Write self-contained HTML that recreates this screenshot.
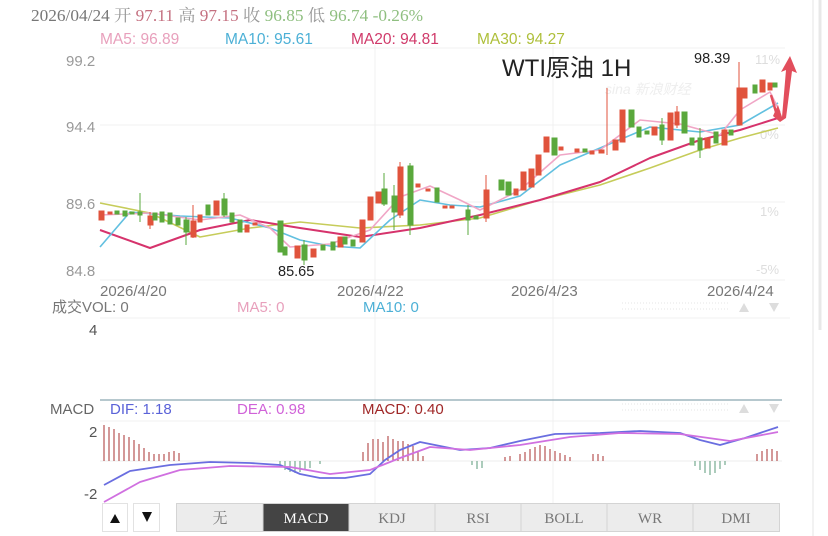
<!DOCTYPE html>
<html><head><meta charset="utf-8"><style>
html,body{margin:0;padding:0;background:#fff;width:828px;height:536px;overflow:hidden}
svg{display:block}
text{font-family:"Liberation Sans","Noto Sans CJK SC",sans-serif}
.s{font-family:"Liberation Serif","Noto Serif CJK SC",serif}
</style></head><body>
<svg width="828" height="536" viewBox="0 0 828 536" xmlns="http://www.w3.org/2000/svg">
<g stroke="#f0f0f0" stroke-width="1">
<line x1="100" y1="48" x2="785" y2="48"/>
<line x1="100" y1="125" x2="785" y2="125"/>
<line x1="100" y1="202" x2="785" y2="202"/>
<line x1="100" y1="280" x2="785" y2="280"/>
<line x1="375" y1="45" x2="375" y2="505"/>
<line x1="553" y1="45" x2="553" y2="505"/>
<line x1="100" y1="318" x2="790" y2="318"/>
<line x1="100" y1="421" x2="790" y2="421"/>
</g>
<line x1="813" y1="0" x2="813" y2="536" stroke="#f2f2f2" stroke-width="2"/>
<line x1="820" y1="0" x2="820" y2="330" stroke="#e8e8e8" stroke-width="3"/>
<line x1="100" y1="400" x2="782" y2="400" stroke="#8aa6b0" stroke-width="1.2"/>

<text x="31" y="21" font-size="16.5" class="s" fill="#777" textLength="392" lengthAdjust="spacingAndGlyphs">2026/04/24 <tspan fill="#999">开</tspan> <tspan fill="#c47080">97.11</tspan> <tspan fill="#999">高</tspan> <tspan fill="#c47080">97.15</tspan> <tspan fill="#999">收</tspan> <tspan fill="#8fbf80">96.85</tspan> <tspan fill="#999">低</tspan> <tspan fill="#8fbf80">96.74 -0.26%</tspan></text>
<text x="100" y="44" font-size="15.5" fill="#e8a0bc">MA5: 96.89</text>
<text x="225" y="44" font-size="15.5" fill="#4cb0d6">MA10: 95.61</text>
<text x="351" y="44" font-size="15.5" fill="#d03a6a">MA20: 94.81</text>
<text x="477" y="44" font-size="15.5" fill="#aebf3a">MA30: 94.27</text>

<text x="66" y="66" font-size="15" fill="#999">99.2</text>
<text x="66" y="132" font-size="15" fill="#999">94.4</text>
<text x="66" y="209" font-size="15" fill="#999">89.6</text>
<text x="66" y="276" font-size="15" fill="#999">84.8</text>
<g font-size="13" fill="#ddd"><text x="755" y="64">11%</text><text x="760" y="139">0%</text><text x="760" y="216">1%</text><text x="756" y="274">-5%</text></g>
<text x="605" y="94" font-size="14" fill="#eee" font-style="italic">sina 新浪财经</text>

<text x="502" y="76" font-size="24" fill="#222">WTI原油 1H</text>
<text x="694" y="63" font-size="14.5" fill="#222">98.39</text>
<text x="278" y="276" font-size="14.5" fill="#222">85.65</text>

<g fill="none" stroke-width="1.6" stroke-linejoin="round">
<polyline stroke="#c6cc5a" points="100,203 150,213 200,237 250,228 300,222 360,228 420,225 480,218 540,200 600,185 650,168 700,150 740,138 778,128"/>
<polyline stroke="#d6336c" stroke-width="2" points="100,230 150,248 200,230 250,220 300,228 360,237 420,228 480,215 540,200 600,182 650,158 700,140 740,130 778,118"/>
<polyline stroke="#62c0e0" points="100,247 130,212 180,216 230,218 270,228 300,240 330,246 360,248 390,220 420,200 450,205 480,207 520,196 560,165 600,148 650,127 700,132 740,125 778,103"/>
<polyline stroke="#f0a6c6" points="100,215 150,213 200,220 240,215 270,228 290,247 330,244 370,230 400,197 430,186 460,200 480,210 520,190 560,155 600,150 640,120 680,124 720,135 740,110 770,92 780,112"/>
</g>

<g stroke-width="1">
<g fill="#e0533c" stroke="#e0533c">
<rect x="99" y="211" width="5" height="9"/><rect x="108" y="212" width="4" height="2"/>
<rect x="148" y="216" width="5" height="9"/><line x1="150" y1="212" x2="150" y2="229"/>
<line x1="193" y1="205" x2="193" y2="238"/><rect x="191" y="221" width="5" height="16"/>
<rect x="198" y="215" width="4" height="7"/><rect x="214" y="201" width="5" height="14"/>
<rect x="245" y="225" width="4" height="7"/><rect x="253" y="223" width="4" height="2"/>
<rect x="295" y="246" width="5" height="12"/><rect x="311" y="249" width="5" height="8"/>
<rect x="338" y="237" width="5" height="10"/>
<rect x="360" y="220" width="5" height="22"/><rect x="368" y="197" width="5" height="23"/>
<rect x="376" y="192" width="5" height="11"/><line x1="400" y1="162" x2="400" y2="218"/><rect x="398" y="167" width="5" height="48"/>
<rect x="416" y="184" width="4" height="3"/><rect x="426" y="189" width="4" height="2"/><rect x="443" y="206" width="4" height="2"/><rect x="450" y="206" width="4" height="2"/>
<line x1="486" y1="175" x2="486" y2="222"/><rect x="484" y="190" width="5" height="28"/>
<rect x="514" y="189" width="4" height="6"/><rect x="521" y="172" width="5" height="18"/>
<rect x="529" y="169" width="5" height="18"/><rect x="536" y="155" width="5" height="20"/><rect x="544" y="137" width="5" height="15"/>
<rect x="559" y="147" width="4" height="3"/><rect x="575" y="149" width="4" height="3"/><rect x="590" y="151" width="4" height="3"/>
<line x1="607" y1="88" x2="607" y2="155"/><rect x="599" y="150" width="5" height="3"/>
<rect x="613" y="140" width="5" height="10"/><rect x="620" y="110" width="5" height="32"/>
<rect x="652" y="127" width="5" height="8"/><rect x="668" y="113" width="5" height="27"/><line x1="677" y1="106" x2="677" y2="128"/><rect x="675" y="112" width="4" height="13"/>
<rect x="705" y="138" width="5" height="10"/><rect x="722" y="130" width="5" height="15"/>
<line x1="739" y1="62" x2="739" y2="125"/><rect x="737" y="88" width="5" height="37"/>
<rect x="743" y="88" width="4" height="10"/><rect x="760" y="80" width="5" height="12"/><rect x="768" y="83" width="4" height="7"/>
</g>
<g fill="#5aa83c" stroke="#5aa83c">
<rect x="115" y="211" width="4" height="3"/><rect x="123" y="211" width="4" height="5"/><rect x="130" y="212" width="4" height="2"/>
<line x1="140" y1="193" x2="140" y2="222"/><rect x="138" y="212" width="4" height="3"/>
<rect x="153" y="213" width="4" height="7"/><rect x="160" y="212" width="4" height="10"/><rect x="168" y="213" width="4" height="11"/>
<rect x="176" y="218" width="4" height="7"/><line x1="186" y1="217" x2="186" y2="245"/><rect x="184" y="220" width="5" height="12"/>
<rect x="206" y="205" width="4" height="10"/><line x1="224" y1="193" x2="224" y2="217"/><rect x="222" y="199" width="5" height="16"/>
<rect x="230" y="213" width="4" height="9"/><rect x="238" y="220" width="4" height="12"/>
<rect x="278" y="221" width="5" height="31"/><rect x="283" y="247" width="4" height="8"/>
<line x1="304" y1="240" x2="304" y2="265"/><rect x="302" y="245" width="5" height="15"/>
<rect x="321" y="245" width="4" height="5"/><rect x="331" y="242" width="4" height="8"/><rect x="343" y="237" width="4" height="7"/><rect x="351" y="240" width="4" height="6"/>
<line x1="384" y1="173" x2="384" y2="206"/><rect x="382" y="189" width="5" height="15"/>
<line x1="394" y1="185" x2="394" y2="230"/><rect x="392" y="196" width="5" height="16"/>
<line x1="410" y1="163" x2="410" y2="235"/><rect x="408" y="166" width="5" height="59"/>
<rect x="435" y="188" width="4" height="14"/><line x1="468" y1="205" x2="468" y2="235"/><rect x="466" y="210" width="4" height="10"/><rect x="474" y="216" width="4" height="3"/>
<rect x="499" y="180" width="5" height="10"/><rect x="506" y="182" width="5" height="13"/>
<rect x="552" y="138" width="5" height="17"/><rect x="583" y="149" width="4" height="3"/>
<rect x="629" y="110" width="5" height="17"/><rect x="637" y="127" width="4" height="10"/><rect x="645" y="131" width="4" height="3"/>
<line x1="662" y1="118" x2="662" y2="145"/><rect x="660" y="125" width="4" height="15"/>
<rect x="682" y="112" width="5" height="21"/><rect x="690" y="138" width="4" height="7"/>
<line x1="700" y1="128" x2="700" y2="158"/><rect x="698" y="138" width="4" height="12"/>
<rect x="714" y="132" width="4" height="11"/><rect x="729" y="130" width="4" height="5"/>
<rect x="753" y="85" width="4" height="8"/><rect x="773" y="83" width="4" height="4"/>
</g>
</g>
<path d="M773,116 L778,105 L782,117 L786,70 L781,72 L790,56 L797,73 L792,71 L786,118 L780,122 Z" fill="#e24e5c"/>
<path d="M771,95 L776,112" stroke="#e24e5c" stroke-width="2.5"/>

<g font-size="15" fill="#777"><text x="100" y="296">2026/4/20</text><text x="337" y="296">2026/4/22</text><text x="511" y="296">2026/4/23</text><text x="707" y="296">2026/4/24</text></g>
<g fill="#ddd"><path d="M739,312 L744,303 L749,312Z"/><path d="M769,303 L779,303 L774,312Z"/><path d="M739,413 L744,404 L749,413Z"/><path d="M769,404 L779,404 L774,413Z"/></g>
<g stroke="#e4e4e4" stroke-dasharray="1,2"><line x1="622" y1="303" x2="728" y2="303"/><line x1="622" y1="309" x2="728" y2="309"/><line x1="622" y1="404" x2="728" y2="404"/><line x1="622" y1="410" x2="728" y2="410"/></g>

<text x="52" y="312" font-size="15" fill="#777">成交</text>
<text x="82" y="312" font-size="15" fill="#777">VOL: 0</text>
<text x="237" y="312" font-size="15" fill="#e8a0bc">MA5: 0</text>
<text x="363" y="312" font-size="15" fill="#4cb0d6">MA10: 0</text>
<text x="89" y="335" font-size="15" fill="#555">4</text>

<text x="50" y="414" font-size="15" fill="#666">MACD</text>
<text x="110" y="414" font-size="15" fill="#5a62d8">DIF: 1.18</text>
<text x="237" y="414" font-size="15" fill="#d062d8">DEA: 0.98</text>
<text x="362" y="414" font-size="15" fill="#a02828">MACD: 0.40</text>
<text x="89" y="437" font-size="15" fill="#555">2</text>
<text x="84" y="499" font-size="15" fill="#555">-2</text>
<line x1="100" y1="461" x2="782" y2="461" stroke="#eee"/>
<g stroke="#a83030" stroke-width="1">
<line x1="104" y1="461" x2="104" y2="425"/><line x1="109" y1="461" x2="109" y2="427"/><line x1="114" y1="461" x2="114" y2="429"/><line x1="119" y1="461" x2="119" y2="433"/><line x1="124" y1="461" x2="124" y2="435"/><line x1="129" y1="461" x2="129" y2="437"/><line x1="134" y1="461" x2="134" y2="440"/><line x1="139" y1="461" x2="139" y2="444"/><line x1="144" y1="461" x2="144" y2="448"/><line x1="149" y1="461" x2="149" y2="452"/><line x1="154" y1="461" x2="154" y2="454"/><line x1="159" y1="461" x2="159" y2="454"/><line x1="164" y1="461" x2="164" y2="454"/><line x1="169" y1="461" x2="169" y2="452"/><line x1="174" y1="461" x2="174" y2="451"/><line x1="179" y1="461" x2="179" y2="453"/>
<line x1="363" y1="461" x2="363" y2="452"/><line x1="368" y1="461" x2="368" y2="443"/><line x1="373" y1="461" x2="373" y2="439"/><line x1="378" y1="461" x2="378" y2="439"/><line x1="383" y1="461" x2="383" y2="442"/><line x1="388" y1="461" x2="388" y2="436"/><line x1="393" y1="461" x2="393" y2="439"/><line x1="398" y1="461" x2="398" y2="441"/><line x1="403" y1="461" x2="403" y2="441"/><line x1="408" y1="461" x2="408" y2="444"/><line x1="413" y1="461" x2="413" y2="446"/><line x1="418" y1="461" x2="418" y2="451"/><line x1="423" y1="461" x2="423" y2="456"/>
<line x1="505" y1="461" x2="505" y2="457"/><line x1="510" y1="461" x2="510" y2="456"/><line x1="520" y1="461" x2="520" y2="454"/><line x1="525" y1="461" x2="525" y2="452"/><line x1="530" y1="461" x2="530" y2="449"/><line x1="535" y1="461" x2="535" y2="447"/><line x1="540" y1="461" x2="540" y2="445"/><line x1="545" y1="461" x2="545" y2="446"/><line x1="550" y1="461" x2="550" y2="449"/><line x1="555" y1="461" x2="555" y2="451"/><line x1="560" y1="461" x2="560" y2="453"/><line x1="565" y1="461" x2="565" y2="455"/><line x1="570" y1="461" x2="570" y2="457"/>
<line x1="593" y1="461" x2="593" y2="454"/><line x1="598" y1="461" x2="598" y2="454"/><line x1="603" y1="461" x2="603" y2="456"/>
<line x1="757" y1="461" x2="757" y2="454"/><line x1="762" y1="461" x2="762" y2="451"/><line x1="767" y1="461" x2="767" y2="449"/><line x1="772" y1="461" x2="772" y2="449"/><line x1="777" y1="461" x2="777" y2="451"/>
</g>
<g stroke="#5a9a78" stroke-width="1">
<line x1="280" y1="461" x2="280" y2="466"/><line x1="285" y1="461" x2="285" y2="470"/><line x1="290" y1="461" x2="290" y2="472"/><line x1="295" y1="461" x2="295" y2="473"/><line x1="300" y1="461" x2="300" y2="472"/><line x1="305" y1="461" x2="305" y2="470"/><line x1="310" y1="461" x2="310" y2="468"/><line x1="320" y1="461" x2="320" y2="464"/>
<line x1="472" y1="461" x2="472" y2="465"/><line x1="477" y1="461" x2="477" y2="469"/><line x1="482" y1="461" x2="482" y2="468"/>
<line x1="695" y1="461" x2="695" y2="466"/><line x1="700" y1="461" x2="700" y2="470"/><line x1="705" y1="461" x2="705" y2="473"/><line x1="710" y1="461" x2="710" y2="475"/><line x1="715" y1="461" x2="715" y2="473"/><line x1="720" y1="461" x2="720" y2="469"/><line x1="725" y1="461" x2="725" y2="465"/>
</g>
<g fill="none" stroke-width="1.8" stroke-linejoin="round">
<polyline stroke="#6a6ee0" points="104,485 130,471 170,465 210,462 250,463 280,465 300,474 320,478 345,478 370,474 385,460 400,450 420,442 460,450 490,448 520,441 555,434 600,433 640,431 680,433 700,440 720,445 745,438 778,427"/>
<polyline stroke="#d070e0" points="104,502 140,482 180,470 230,466 290,467 330,474 370,470 400,458 430,447 470,450 520,445 570,437 620,433 680,434 730,441 778,432"/>
</g>

<g stroke="#e2e2e2" fill="#fff"><rect x="102.5" y="503.5" width="25" height="28"/><rect x="133.5" y="503.5" width="26" height="28"/></g>
<path d="M110,523 L115,514 L120,523Z" fill="#111"/><path d="M142,512 L152,512 L147,522Z" fill="#111"/>
<rect x="176.5" y="503.5" width="603" height="28" fill="#ececec" stroke="#d4d4d4"/>
<rect x="263" y="504" width="86" height="27" fill="#444"/>
<g stroke="#d4d4d4"><line x1="263" y1="504" x2="263" y2="531"/><line x1="349" y1="504" x2="349" y2="531"/><line x1="435" y1="504" x2="435" y2="531"/><line x1="521" y1="504" x2="521" y2="531"/><line x1="607" y1="504" x2="607" y2="531"/><line x1="693" y1="504" x2="693" y2="531"/></g>
<g font-size="15" fill="#777" text-anchor="middle">
<text x="220" y="523" class="s">无</text><text x="306" y="523" class="s" fill="#fff">MACD</text><text x="392" y="523" class="s">KDJ</text><text x="478" y="523" class="s">RSI</text><text x="564" y="523" class="s">BOLL</text><text x="650" y="523" class="s">WR</text><text x="736" y="523" class="s">DMI</text>
</g>
</svg>
</body></html>
